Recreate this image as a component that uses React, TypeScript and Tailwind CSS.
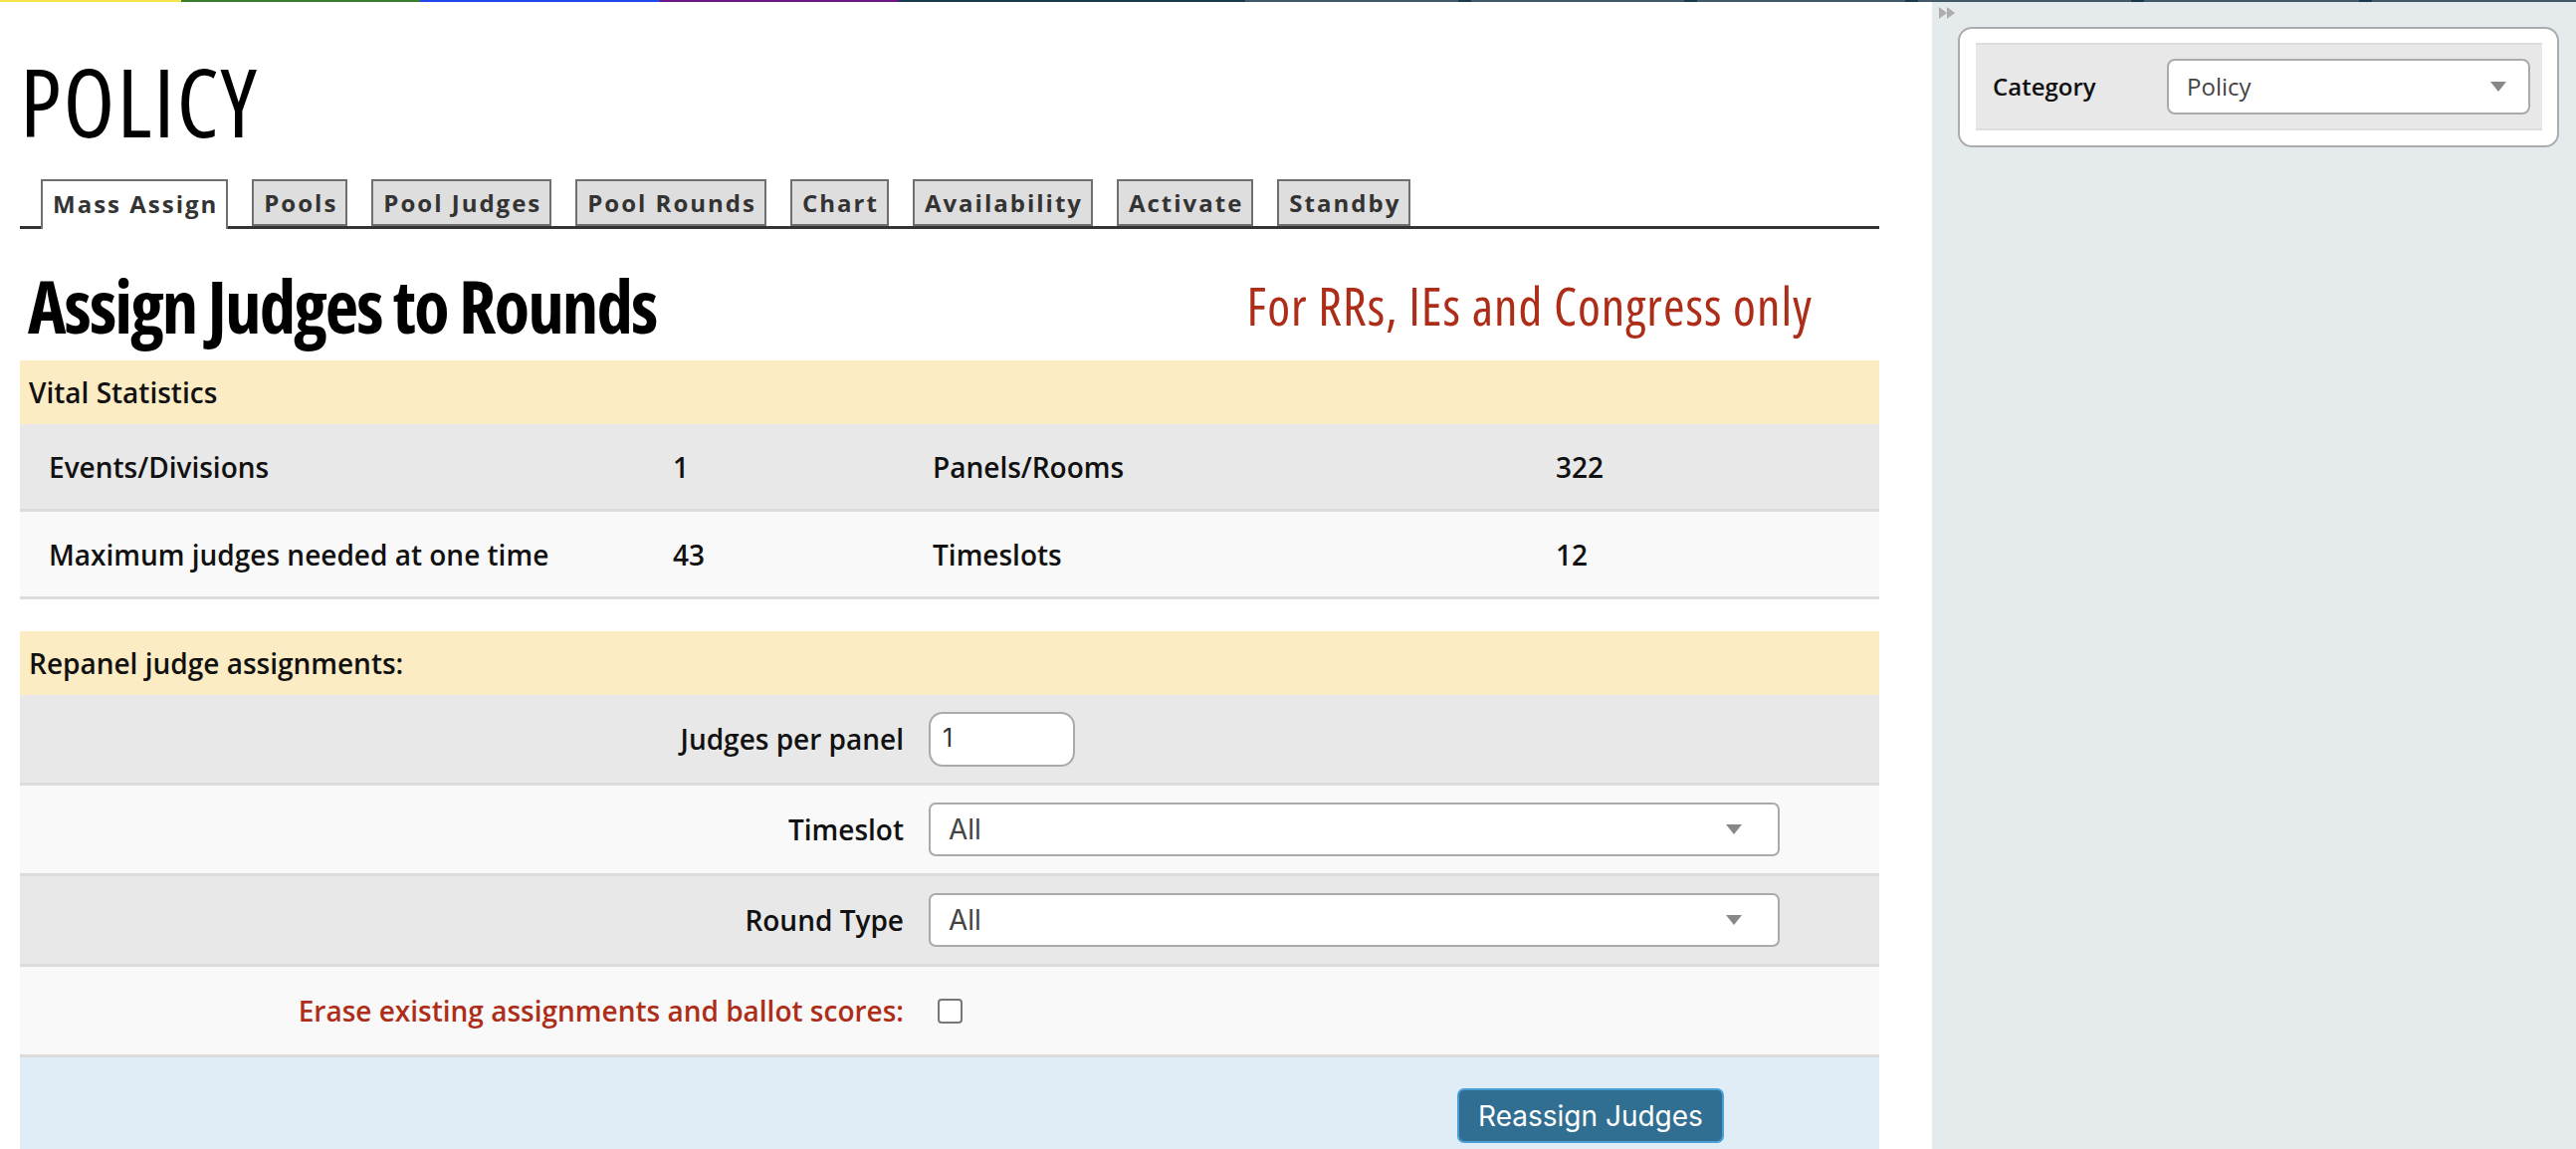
import React from 'react';

/* ── top colour strip (only a sliver of the nav is visible) ── */
const stripSegments: { color: string; width: string }[] = [
  { color: 'bg-[#f6e44b]', width: 'w-[182px]' },
  { color: 'bg-[#3b7d2e]', width: 'w-[240px]' },
  { color: 'bg-[#2046ec]', width: 'w-[241px]' },
  { color: 'bg-[#6c1686]', width: 'w-[240px]' },
  { color: 'bg-[#173a4d]', width: 'w-[348px]' },
];

const TABS = ['Mass Assign', 'Pools', 'Pool Judges', 'Pool Rounds', 'Chart', 'Availability', 'Activate', 'Standby'];

function DownArrow() {
  return (
    <svg width="16" height="10" viewBox="0 0 16 10" className="shrink-0">
      <polygon points="0,0 16,0 8,10" fill="#888" />
    </svg>
  );
}

function FastForward() {
  return (
    <svg width="17" height="12" viewBox="0 0 17 12">
      <polygon points="0,0 8,6 0,12" fill="#adadad" />
      <polygon points="8,0 16,6 8,12" fill="#adadad" />
    </svg>
  );
}

function Tab({ label, active }: { label: string; active?: boolean }) {
  if (active) {
    return (
      <div className="-mb-[3px] flex h-[50px] items-center border-2 border-b-0 border-[#6f6f6f] bg-white pb-[3px] pl-[10px] pr-[8px] text-[24px] font-bold tracking-[2px] text-[#333]">
        {label}
      </div>
    );
  }
  return (
    <div className="flex h-[47px] items-center border-2 border-[#6f6f6f] bg-[#dedede] pl-[10px] pr-[8px] text-[24px] font-bold tracking-[2px] text-[#333]">
      {label}
    </div>
  );
}

function StatRow({ cells, odd }: { cells: string[]; odd?: boolean }) {
  return (
    <div
      className={`grid h-[88px] grid-cols-[627px_261px_626px_1fr] items-center border-b-[3px] border-[#dcdcdc] text-[28px] font-semibold text-[#111] ${
        odd ? 'bg-[#e8e8e8]' : 'bg-[#f9f9f9]'
      }`}
    >
      {cells.map((c, i) => (
        <div key={i} className="pl-[29px]">
          {c}
        </div>
      ))}
    </div>
  );
}

function FormRow({ label, odd, red, children }: { label: string; odd?: boolean; red?: boolean; children: React.ReactNode }) {
  return (
    <div className={`flex h-[91px] items-center border-b-[3px] border-[#dcdcdc] ${odd ? 'bg-[#e8e8e8]' : 'bg-[#f9f9f9]'}`}>
      <div className={`w-[888px] text-right text-[28px] font-semibold ${red ? 'text-[#ae2d18]' : 'text-[#111]'}`}>{label}</div>
      <div className="ml-[25px] flex items-center">{children}</div>
    </div>
  );
}

function SelectBox({ value }: { value: string }) {
  return (
    <div className="flex h-[54px] w-[855px] items-center justify-between rounded-[7px] border-2 border-[#aaa] bg-white pl-[18px] pr-[36px] font-['Inter',sans-serif] text-[28px] text-[#444]">
      <span>{value}</span>
      <DownArrow />
    </div>
  );
}

export default function App() {
  return (
    <div className="min-h-screen w-full overflow-hidden bg-white font-['Open_Sans','Noto_Sans',sans-serif]">
      {/* ── Top strip ── */}
      <div className="flex h-[2px] w-full">
        {stripSegments.map((s, i) => (
          <div key={i} className={`${s.color} ${s.width}`} />
        ))}
        <div className="w-[214px] bg-[#42596a]" />
        <div className="w-[13px] bg-[#173a4d]" />
        <div className="w-[214px] bg-[#42596a]" />
        <div className="w-[13px] bg-[#173a4d]" />
        <div className="w-[209px] bg-[#42596a]" />
        <div className="w-[13px] bg-[#173a4d]" />
        <div className="w-[214px] bg-[#42596a]" />
        <div className="w-[13px] bg-[#173a4d]" />
        <div className="w-[216px] bg-[#42596a]" />
        <div className="w-[13px] bg-[#173a4d]" />
        <div className="flex-1 bg-[#42596a]" />
      </div>

      <div className="flex">
        {/* ── Main column ── */}
        <main className="flex-1 pl-[20px] pr-[53px] pt-[52px]">
          <h1 className="text-[95px] font-medium leading-none tracking-[2px] text-black [font-stretch:75%]">POLICY</h1>

          {/* Tabs */}
          <div className="mt-[31px] flex items-end gap-[24px] border-b-[3px] border-[#333] pl-[21px]">
            {TABS.map((t, i) => (
              <Tab key={t} label={t} active={i === 0} />
            ))}
          </div>

          {/* Heading */}
          <div className="mt-[40px] flex items-center justify-between pl-[8px] pr-[67px]">
            <h2 className="text-[73px] font-bold leading-none tracking-[-1.9px] text-black [font-stretch:75%]">
              Assign Judges to Rounds
            </h2>
            <div className="text-[52px] leading-none tracking-[1px] text-[#ad2d19] [font-stretch:75%]">
              For RRs, IEs and Congress only
            </div>
          </div>

          {/* Vital statistics */}
          <div className="mt-[19px]">
            <div className="flex h-[64px] items-center bg-[#fcecc4] pl-[9px] text-[28px] font-semibold text-[#111]">
              Vital Statistics
            </div>
            <StatRow odd cells={['Events/Divisions', '1', 'Panels/Rooms', '322']} />
            <StatRow cells={['Maximum judges needed at one time', '43', 'Timeslots', '12']} />
          </div>

          {/* Repanel */}
          <div className="mt-[32px]">
            <div className="flex h-[64px] items-center bg-[#fcecc4] pl-[9px] text-[28px] font-semibold text-[#111]">
              Repanel judge assignments:
            </div>
            <FormRow label="Judges per panel" odd>
              <div className="flex h-[55px] w-[147px] items-center rounded-[14px] border-2 border-[#aaa] bg-white pl-[12px] font-['Inter',sans-serif] text-[25px] text-[#333]">
                1
              </div>
            </FormRow>
            <FormRow label="Timeslot">
              <SelectBox value="All" />
            </FormRow>
            <FormRow label="Round Type" odd>
              <SelectBox value="All" />
            </FormRow>
            <FormRow label="Erase existing assignments and ballot scores:" red>
              <span className="ml-[9px] block h-[25px] w-[25px] rounded-[4px] border-2 border-[#777] bg-white" />
            </FormRow>
            <div className="flex justify-end bg-[#e0edf6] pb-[30px] pr-[156px] pt-[31px]">
              <button className="h-[55px] w-[268px] rounded-[7px] border-2 border-[#4aa0d5] bg-[#306f91] font-['Inter',sans-serif] text-[28px] text-white">
                Reassign Judges
              </button>
            </div>
          </div>
        </main>

        {/* ── Sidebar ── */}
        <aside className="min-h-[1152px] w-[647px] shrink-0 bg-[#e5eaed] pl-[7px] pt-[5px]">
          <FastForward />
          <div className="ml-[19px] mr-[17px] mt-[8px] rounded-[14px] border-2 border-[#acacac] bg-white pb-[15px] pl-[16px] pr-[15px] pt-[14px]">
            <div className="flex h-[88px] items-center border-y-2 border-[#dddddd] bg-[#e8e8e8] pl-[17px]">
              <div className="w-[175px] text-[24px] font-semibold text-[#111]">Category</div>
              <div className="flex h-[56px] w-[365px] items-center justify-between rounded-[8px] border-2 border-[#aaa] bg-white pl-[18px] pr-[22px] text-[24px] text-[#444]">
                <span>Policy</span>
                <DownArrow />
              </div>
            </div>
          </div>
        </aside>
      </div>
    </div>
  );
}
